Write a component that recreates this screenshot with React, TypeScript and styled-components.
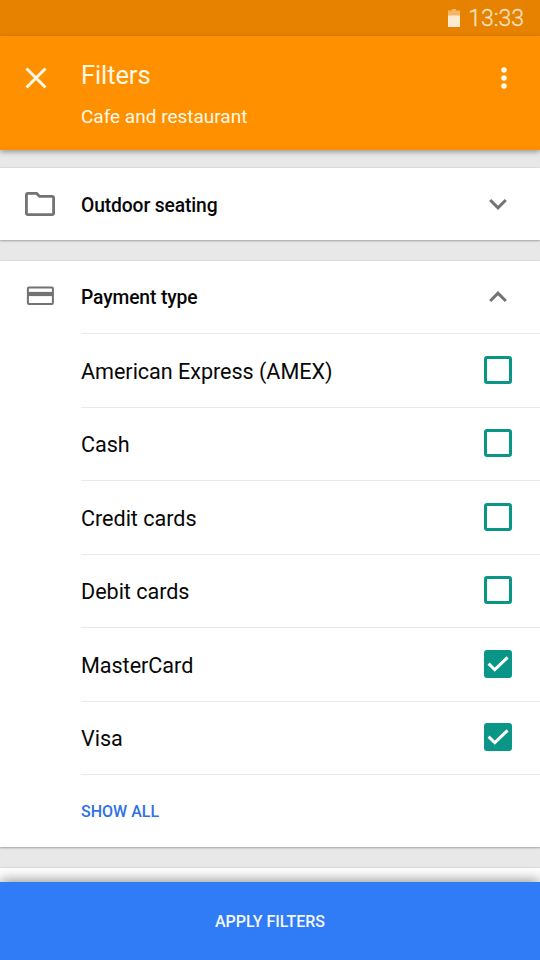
import React, { useState } from "react";
import styled, { createGlobalStyle } from "styled-components";

const GlobalStyle = createGlobalStyle`
  *, *::before, *::after { box-sizing: border-box; }
  body { margin: 0; background: #e8e8e8; }
  button { border: 0; padding: 0; background: none; font: inherit; color: inherit; cursor: pointer; }
  svg { display: block; }
`;

const Screen = styled.div`
  display: flex;
  flex-direction: column;
  height: 960px;
  overflow: hidden;
  background: #e8e8e8;
  color: #080808;
  font-family: Roboto, "Liberation Sans", sans-serif;
`;

const StatusBar = styled.div`
  display: flex;
  flex: none;
  align-items: center;
  justify-content: flex-end;
  gap: 8px;
  height: 36px;
  padding-right: 16px;
  background: #e68200;
  color: #fce3c1;
`;

const Clock = styled.span`
  padding-top: 2px;
  font-size: 23px;
  line-height: 34px;
  font-weight: 300;
  -webkit-text-stroke: 0.3px #fce3c1;
`;

const Header = styled.header`
  display: grid;
  flex: none;
  z-index: 1;
  grid-template-columns: 81px 1fr 72px;
  height: 114px;
  background: #ff9000;
  color: #fff8e6;
  box-shadow: 0 2px 5px rgba(0, 0, 0, 0.34);
`;

const CloseButton = styled.button`
  display: flex;
  align-self: start;
  padding: 31px 0 0 25px !important;
`;

const MoreButton = styled.button`
  display: flex;
  align-self: start;
  justify-content: center;
  padding-top: 30px !important;
`;

const Titles = styled.div`
  display: flex;
  flex-direction: column;
  padding-top: 23px;
`;

const Title = styled.h1`
  margin: 0;
  font-size: 25.5px;
  letter-spacing: -0.1px;
  line-height: 32px;
  font-weight: 400;
`;

const Subtitle = styled.p`
  margin: 14px 0 0;
  font-size: 19px;
  line-height: 24px;
`;

const Content = styled.main`
  display: flex;
  flex: 1;
  flex-direction: column;
  gap: 20.5px;
  min-height: 0;
  padding-top: 18px;
  overflow: hidden;
`;

const Card = styled.section`
  flex: none;
  background: #fff;
  box-shadow: 0 0 1px rgba(0, 0, 0, 0.2), 0 1px 2px rgba(0, 0, 0, 0.28);
`;

const SectionHeader = styled.button<{ $height: number }>`
  display: grid;
  grid-template-columns: 81px 1fr 84px;
  align-items: center;
  width: 100%;
  height: ${(p) => p.$height}px;
  text-align: left;
  color: #080808;
`;

const SectionIcon = styled.span`
  display: flex;
  justify-content: center;
  padding: 0 1px 1px 0;
  color: #737373;
`;

const SectionTitle = styled.span`
  padding-top: 3px;
  font-size: 19.3px;
  letter-spacing: -0.13px;
  line-height: 24px;
  font-weight: 500;
`;

const Trailing = styled.span`
  display: flex;
  justify-content: center;
  color: #737373;
`;

const Options = styled.div`
  margin-left: 81px;
`;

const OptionRow = styled.label`
  display: grid;
  grid-template-columns: 1fr 84px;
  align-items: center;
  height: 73.5px;
  padding-top: 2px;
  border-top: 1px solid #e9e9e9;
  font-size: 21.6px;
  letter-spacing: -0.04px;
  line-height: 28px;
  cursor: pointer;
`;

const OptionName = styled.span`
  padding-top: 1px;
`;

const HiddenInput = styled.input`
  display: none;
`;

const Box = styled.span<{ $checked: boolean }>`
  display: flex;
  align-items: center;
  justify-content: center;
  justify-self: center;
  width: 28px;
  height: 28px;
  margin-top: -3px;
  border: 3px solid #099686;
  border-radius: 3px;
  background: ${(p) => (p.$checked ? "#099686" : "#fff")};
`;

const ShowAll = styled.button`
  display: flex;
  align-items: center;
  width: 100%;
  height: 72.5px;
  padding-top: 1px !important;
  border-top: 1px solid #e9e9e9 !important;
  color: #2f72e4;
  font-size: 16px !important;
  font-weight: 500 !important;
`;

const NextCard = styled(Card)`
  height: 74px;
  margin-top: 1px;
`;

const ApplyButton = styled.button`
  flex: none;
  z-index: 1;
  height: 78px;
  background: #307bf6;
  color: #f3f8ff;
  font-size: 16px;
  font-weight: 500;
  box-shadow: 0 -2px 12px rgba(0, 0, 0, 0.42);
`;

const BatteryIcon = () => (
  <svg width="12" height="18" viewBox="0 0 12 18">
    <path d="M4 0h4v1.5h4V7H0V1.5h4z" fill="#f2b56a" />
    <path d="M0 6.5h12V18H0z" fill="#fdead0" />
  </svg>
);

const CloseIcon = () => (
  <svg width="22" height="22" viewBox="0 0 22 22" stroke="currentColor" strokeWidth="3" fill="none">
    <path d="M1.5 1.5l19 19M20.5 1.5l-19 19" />
  </svg>
);

const MoreIcon = () => (
  <svg width="6" height="24" viewBox="0 0 6 24" fill="#fffaf0">
    <circle cx="3" cy="4" r="2.7" />
    <circle cx="3" cy="12" r="2.7" />
    <circle cx="3" cy="20" r="2.7" />
  </svg>
);

const FolderIcon = () => (
  <svg width="30" height="24" viewBox="0 0 30 24">
    <path
      d="M3 1.4h8.6l3 3H27a1.7 1.7 0 0 1 1.6 1.7v14.8a1.7 1.7 0 0 1-1.6 1.7H3a1.7 1.7 0 0 1-1.6-1.7V3.1A1.7 1.7 0 0 1 3 1.4z"
      fill="none"
      stroke="currentColor"
      strokeWidth="2.8"
    />
  </svg>
);

const CardIcon = () => (
  <svg width="28" height="20" viewBox="0 0 28 20">
    <rect x="1.9" y="1.6" width="25" height="16.4" rx="1" fill="none" stroke="currentColor" strokeWidth="2" />
    <path d="M1.4 5.9h26v4.2h-26z" fill="currentColor" />
  </svg>
);

const Chevron = ({ up }: { up?: boolean }) => (
  <svg width="18" height="12" viewBox="0 0 18 12" fill="none" stroke="currentColor" strokeWidth="3">
    <path d={up ? "M1.2 10l7.8-7.8L16.8 10" : "M1.2 2l7.8 7.8L16.8 2"} />
  </svg>
);

const CheckIcon = () => (
  <svg width="22" height="22" viewBox="0 0 22 22" fill="none" stroke="#fff" strokeWidth="3">
    <path d="M1.6 10.6l6.2 6.1L20.6 4.3" />
  </svg>
);

const options = ["American Express (AMEX)", "Cash", "Credit cards", "Debit cards", "MasterCard", "Visa"];

export default function App() {
  const [selected, setSelected] = useState<string[]>(["MasterCard", "Visa"]);
  const toggle = (name: string) =>
    setSelected((s) => (s.includes(name) ? s.filter((n) => n !== name) : [...s, name]));

  return (
    <>
      <GlobalStyle />
      <Screen>
        <StatusBar>
          <BatteryIcon />
          <Clock>13:33</Clock>
        </StatusBar>
        <Header>
          <CloseButton aria-label="Close"><CloseIcon /></CloseButton>
          <Titles>
            <Title>Filters</Title>
            <Subtitle>Cafe and restaurant</Subtitle>
          </Titles>
          <MoreButton aria-label="More options"><MoreIcon /></MoreButton>
        </Header>
        <Content>
          <Card>
            <SectionHeader $height={72}>
              <SectionIcon><FolderIcon /></SectionIcon>
              <SectionTitle>Outdoor seating</SectionTitle>
              <Trailing><Chevron /></Trailing>
            </SectionHeader>
          </Card>
          <Card>
            <SectionHeader $height={72.5}>
              <SectionIcon><CardIcon /></SectionIcon>
              <SectionTitle>Payment type</SectionTitle>
              <Trailing><Chevron up /></Trailing>
            </SectionHeader>
            <Options>
              {options.map((name) => {
                const checked = selected.includes(name);
                return (
                  <OptionRow key={name}>
                    <HiddenInput type="checkbox" checked={checked} onChange={() => toggle(name)} />
                    <OptionName>{name}</OptionName>
                    <Box $checked={checked}>{checked && <CheckIcon />}</Box>
                  </OptionRow>
                );
              })}
              <ShowAll>SHOW ALL</ShowAll>
            </Options>
          </Card>
          <NextCard />
        </Content>
        <ApplyButton>APPLY FILTERS</ApplyButton>
      </Screen>
    </>
  );
}
